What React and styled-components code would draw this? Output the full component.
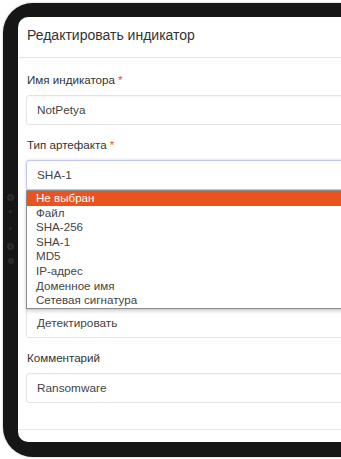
import React from "react";
import styled, { createGlobalStyle } from "styled-components";

const Global = createGlobalStyle`
  html, body { margin: 0; padding: 0; background: #ffffff; overflow: hidden; }
  body { font-family: "Liberation Sans", Arial, sans-serif; }
  * { box-sizing: border-box; }
`;

const Page = styled.div`
  width: 341px;
  height: 459px;
  overflow: hidden;
  padding: 3px 0 0 3px;
`;

const Device = styled.div`
  display: flex;
  width: 420px;
  height: 454px;
  background: #161616;
  border-radius: 30px 0 0 30px;
  padding: 14px 0 15px 0;
  box-shadow: 0 0 2px rgba(0, 0, 0, 0.35);
`;

const Rail = styled.div`
  width: 15px;
  flex: none;
  display: flex;
  flex-direction: column;
  align-items: center;
  padding-top: 177px;
  gap: 8px;
`;

const Dot = styled.span`
  display: block;
  width: ${(p) => p.$size}px;
  height: ${(p) => p.$size}px;
  border-radius: 50%;
  background: ${(p) => (p.$ring ? "#202020" : "#2a2a2a")};
  border: ${(p) => (p.$ring ? "2px solid #2c2c2c" : "none")};
  margin-bottom: ${(p) => p.$after || 0}px;
`;

const Screen = styled.div`
  flex: 1;
  background: #ffffff;
  border-radius: 10px 0 0 10px;
  overflow: hidden;
  position: relative;
  display: flex;
  flex-direction: column;
`;

const Header = styled.div`
  height: 41px;
  flex: none;
  border-bottom: 1px solid #e6e6e6;
  display: flex;
  align-items: center;
  padding: 0 0 4px 9px;
`;

const Title = styled.h4`
  margin: 0;
  font-weight: 400;
  font-size: 14px;
  color: #333333;
`;

const Body = styled.div`
  flex: none;
  padding: 14px 0 26px 8px;
  display: flex;
  flex-direction: column;
  position: relative;
  border-bottom: 1px solid #e8e8e8;
`;

const Group = styled.div`
  display: flex;
  flex-direction: column;
  gap: 7px;
  margin-bottom: 12px;
  position: relative;
  &:last-child { margin-bottom: 0; }
`;

const Label = styled.label`
  font-size: 11.6px;
  line-height: 16px;
  color: #333333;
  padding-left: 1px;
`;

const Req = styled.span`
  color: #e8531f;
  margin-left: 3px;
`;

const Field = styled.div`
  height: ${(p) => p.$h || 30}px;
  width: 330px;
  flex: none;
  border: 1px solid ${(p) => (p.$focus ? "#c3c6f2" : "#e4e4e4")};
  border-radius: 3px;
  background: #ffffff;
  box-shadow: ${(p) =>
    p.$focus
      ? "0 0 3px rgba(110, 120, 230, 0.35)"
      : "inset 0 1px 1px rgba(0,0,0,0.03)"};
  display: flex;
  align-items: center;
  padding: 0 10px;
  font-size: 11.8px;
  color: #444444;
`;

const SelectWrap = styled.div`
  position: relative;
`;

const Menu = styled.ul`
  position: absolute;
  left: 0;
  top: 100%;
  z-index: 5;
  margin: 0;
  padding: 0;
  list-style: none;
  width: 330px;
  background: #ffffff;
  border: 1px solid #8c8c8c;
  box-shadow: 0 2px 4px rgba(0, 0, 0, 0.2);
`;

const Option = styled.li`
  height: 14.6px;
  line-height: 14.6px;
  padding-left: 9px;
  font-size: 11.6px;
  color: ${(p) => (p.$active ? "#ffffff" : "#444444")};
  background: ${(p) => (p.$active ? "#e8531f" : "transparent")};
  white-space: nowrap;
`;

const options = [
  "Не выбран",
  "Файл",
  "SHA-256",
  "SHA-1",
  "MD5",
  "IP-адрес",
  "Доменное имя",
  "Сетевая сигнатура",
];

export default function App() {
  return (
    <Page>
      <Global />
      <Device>
        <Rail>
          <Dot $size={7} $ring $after={1} />
          <Dot $size={3} $after={6} />
          <Dot $size={3} $after={5} />
          <Dot $size={7} $ring />
          <Dot $size={6} $ring />
        </Rail>
        <Screen>
          <Header>
            <Title>Редактировать индикатор</Title>
          </Header>
          <Body>
            <Group>
              <Label>
                Имя индикатора<Req>*</Req>
              </Label>
              <Field>NotPetya</Field>
            </Group>
            <Group>
              <Label>
                Тип артефакта<Req>*</Req>
              </Label>
              <SelectWrap>
                <Field $focus>SHA-1</Field>
                <Menu>
                  {options.map((o, i) => (
                    <Option key={o} $active={i === 0}>
                      {o}
                    </Option>
                  ))}
                </Menu>
              </SelectWrap>
            </Group>
            <Group>
              <Field $h={99} />
              <Field>Детектировать</Field>
            </Group>
            <Group>
              <Label>Комментарий</Label>
              <Field>Ransomware</Field>
            </Group>
          </Body>
        </Screen>
      </Device>
    </Page>
  );
}
